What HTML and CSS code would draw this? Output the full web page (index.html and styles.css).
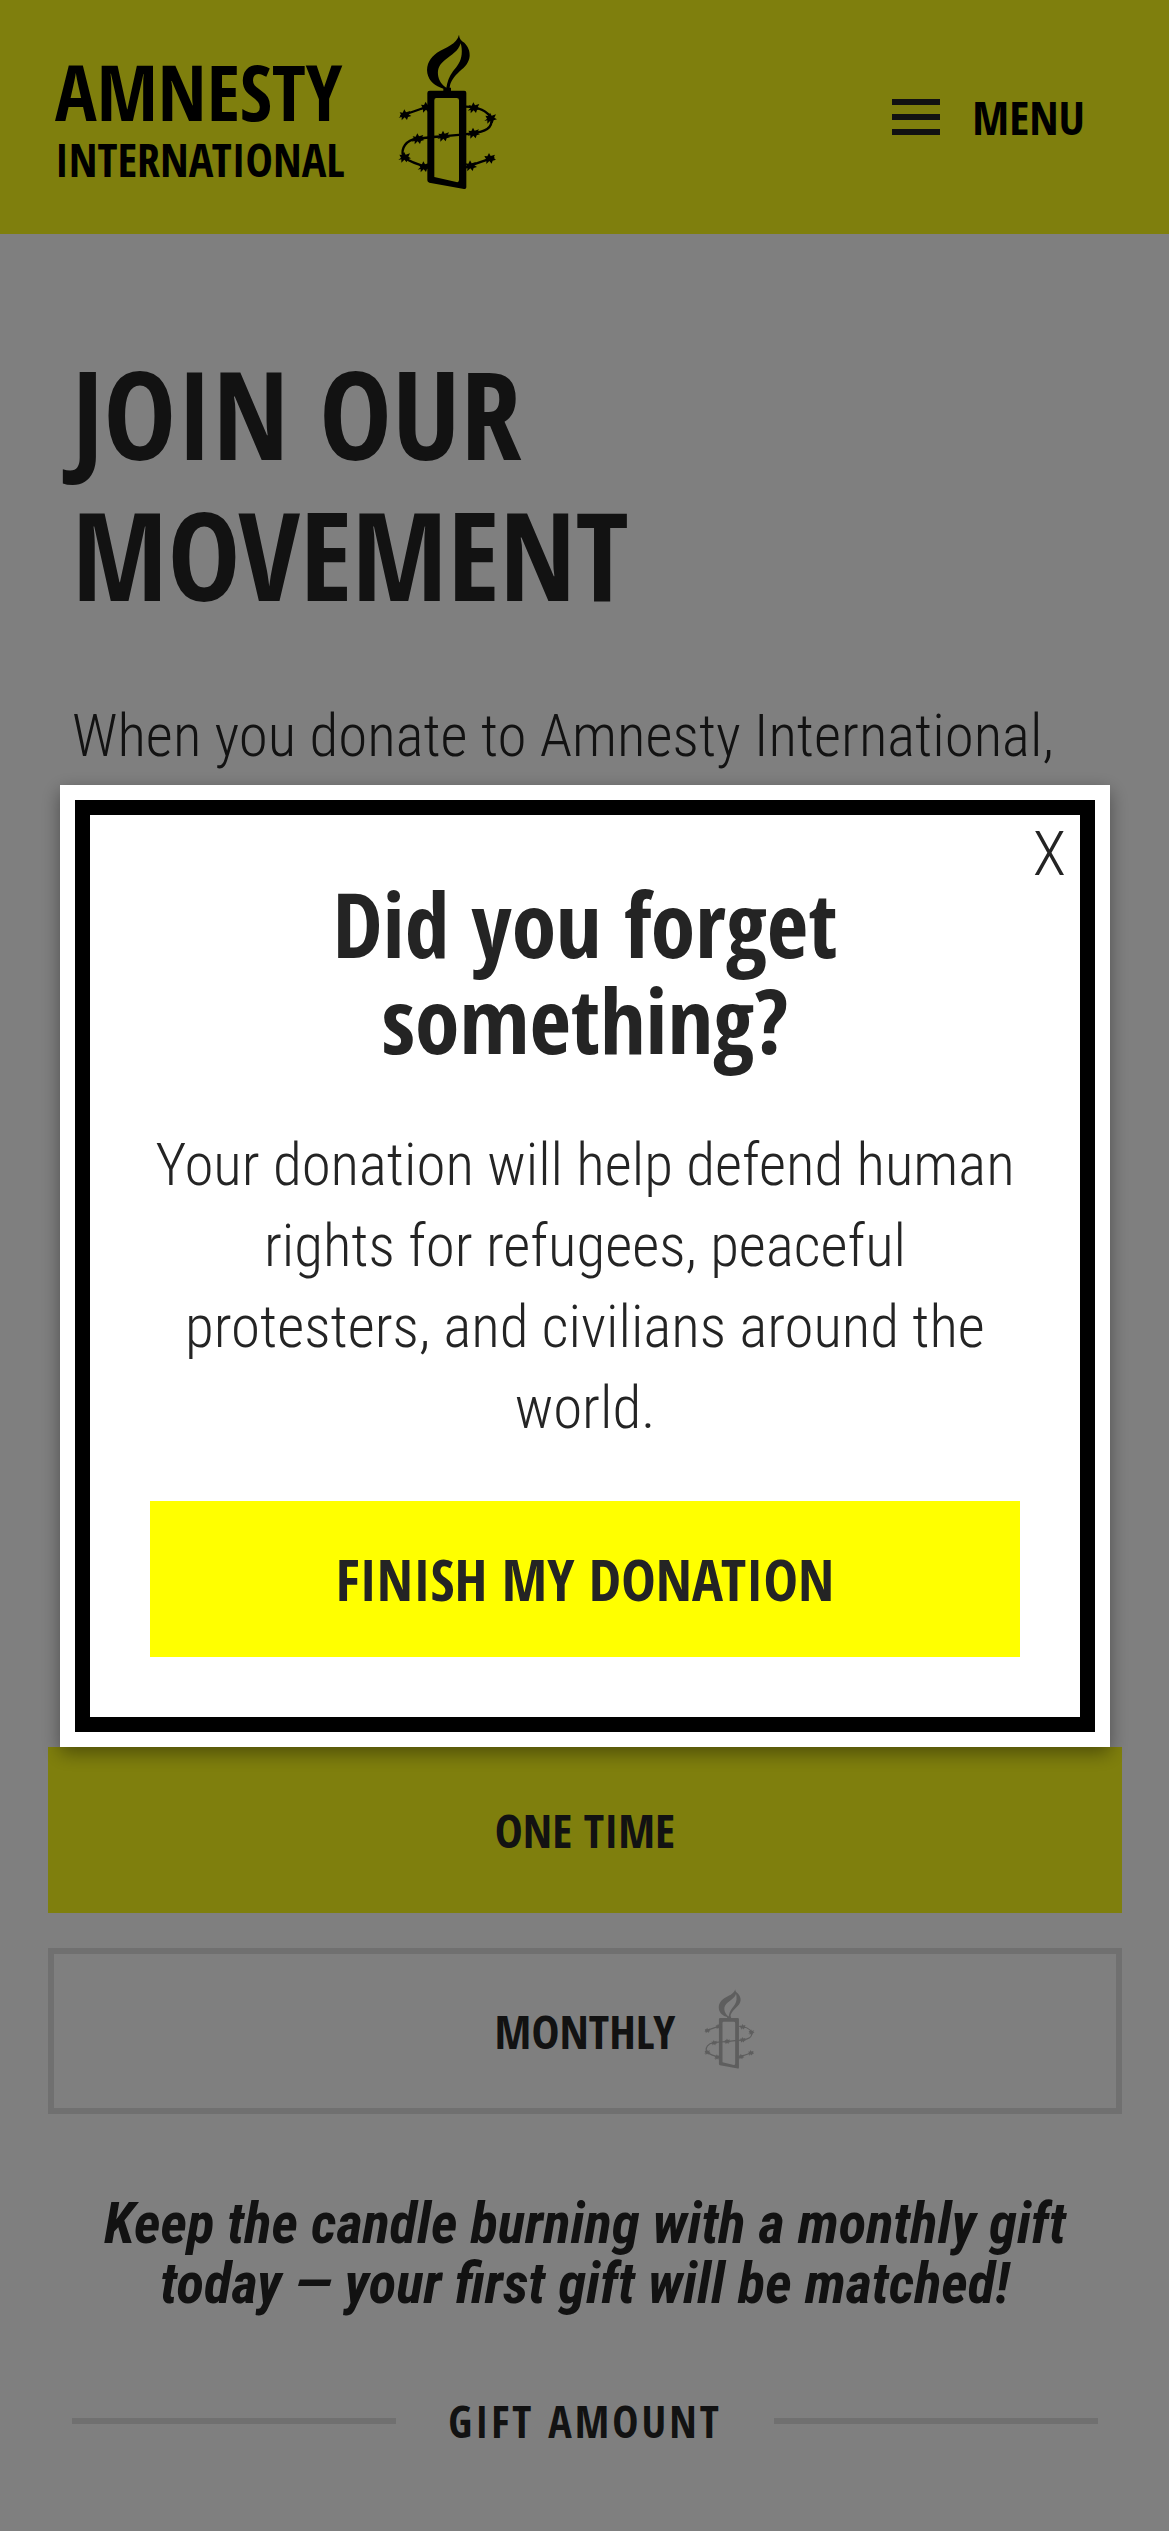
FILE: index.html
```html
<!DOCTYPE html>
<html lang="en">
<head>
<meta charset="utf-8">
<meta name="viewport" content="width=device-width, initial-scale=1">
<title>Join our movement</title>
<link rel="stylesheet" href="styles.css">
</head>
<body>
<svg class="sprite" aria-hidden="true">
  <defs>
    <path id="barb" d="M-19 9L-11 2L-16 -7L-7 -6L-2 -16L3 -7L16 -11L11 -1L19 4L9 7L6 16L-1 8L-10 17L-10 7Z"/>
    <symbol id="candle" viewBox="50 42 300 468">
      <path fill-rule="evenodd" d="M236 44C237 56 242 62 252 68C263 80 269 92 268 108C266 128 255 140 238 154C222 169 210 184 208 203H212V213H189V206C164 198 146 184 141 160C137 132 150 113 170 98C196 82 230 72 236 44ZM241 70C234 94 214 104 193 121C179 132 171 145 173 164C175 181 184 194 198 203C201 186 206 170 218 154C231 139 242 124 244 103C245 91 244 80 241 70Z"/>
      <path fill-rule="evenodd" d="M148 212H252Q258 212 258 218V502Q258 508 251 507L147 488Q141 486 141 481V219Q141 212 148 212ZM168 234Q162 234 162 241V471L228 486Q236 488 236 480V241Q236 234 229 234Z"/>
      <path fill="none" stroke="currentColor" stroke-width="7" d="M60 288Q105 273 146 258M256 260C292 261 320 272 333 295C338 325 314 335 275 340C220 348 157 350 110 356C76 360 62 385 68 409C83 422 112 434 146 442M255 442Q296 427 342 412"/>
      <use href="#barb" x="74" y="284"/><use href="#barb" x="138" y="261"/>
      <use href="#barb" x="281" y="263"/><use href="#barb" x="331" y="294"/>
      <use href="#barb" x="280" y="339"/><use href="#barb" x="190" y="348"/>
      <use href="#barb" x="113" y="356"/><use href="#barb" x="73" y="411"/>
      <use href="#barb" x="131" y="440"/><use href="#barb" x="271" y="437"/>
      <use href="#barb" x="328" y="415"/>
    </symbol>
  </defs>
</svg>

<header class="site-header">
  <a class="brand" href="#">
    <span class="brand-name">
      <span class="brand-top">AMNESTY</span>
      <span class="brand-bottom">INTERNATIONAL</span>
    </span>
    <svg class="brand-candle" aria-hidden="true"><use href="#candle"/></svg>
  </a>
  <button class="menu-button" type="button">
    <span class="menu-icon" aria-hidden="true"><span class="menu-bar"></span><span class="menu-bar"></span><span class="menu-bar"></span></span>
    MENU
  </button>
</header>

<main>
  <section class="intro">
    <h1 class="page-title">JOIN OUR MOVEMENT</h1>
    <p class="lead">When you donate to Amnesty International,</p>
  </section>
  <section class="donate">
    <button class="frequency frequency-selected" type="button">ONE TIME</button>
    <button class="frequency" type="button">
      <span class="frequency-label">MONTHLY<svg class="frequency-candle" aria-hidden="true"><use href="#candle"/></svg></span>
    </button>
    <p class="match-note">Keep the candle burning with a monthly gift today — your first gift will be matched!</p>
    <h2 class="divider">GIFT AMOUNT</h2>
  </section>
</main>

<div class="overlay">
  <div class="modal" role="dialog" aria-modal="true" aria-labelledby="modal-title">
    <div class="modal-frame">
      <button class="modal-close" type="button" aria-label="Close">X</button>
      <h2 class="modal-title" id="modal-title">Did you forget something?</h2>
      <p class="modal-text">Your donation will help defend human rights for refugees, peaceful protesters, and civilians around the world.</p>
      <button class="modal-action" type="button">FINISH MY DONATION</button>
    </div>
  </div>
</div>
</body>
</html>
```
FILE: styles.css
```css
:root {
  --ink: #242424;
  --yellow: #ffff1a;
  --rule: #e0e0e0;
  --heading: "Open Sans Condensed", "Roboto Condensed", "Open Sans", sans-serif;
  --body: "Roboto Condensed", "Roboto", sans-serif;
}

* { box-sizing: border-box; }

body {
  margin: 0;
  min-height: 100vh;
  background: #fff;
  color: var(--ink);
  font-family: var(--body);
  font-weight: 300;
}

h1, h2, p { margin: 0; }

button {
  border: 0;
  padding: 0;
  background: none;
  color: inherit;
  font: inherit;
  cursor: pointer;
}

.sprite { position: absolute; width: 0; height: 0; }

.site-header {
  display: flex;
  align-items: center;
  justify-content: space-between;
  height: 234px;
  padding: 0 84px 0 55px;
  background: var(--yellow);
  color: #000;
  font-family: var(--heading);
  font-weight: 700;
}

.brand {
  display: flex;
  align-items: center;
  gap: 52px;
  color: inherit;
  text-decoration: none;
}

.brand-name { display: flex; flex-direction: column; }
.brand-top { font-size: 78px; line-height: 84px; }
.brand-bottom { font-size: 46px; line-height: 52px; }
.brand-candle { width: 100px; height: 156px; margin-bottom: 10px; fill: currentColor; }

.menu-button {
  display: flex;
  align-items: center;
  gap: 32px;
  font-size: 47px;
  font-weight: 700;
}

.menu-icon { display: flex; flex-direction: column; gap: 9px; }
.menu-bar { width: 48px; height: 6px; background: var(--ink); }

.intro { height: 1513px; padding: 109px 72px 0; }

.page-title {
  max-width: 700px;
  font-family: var(--heading);
  font-size: 122px;
  line-height: 141px;
}

.lead { margin-top: 70px; font-size: 59px; line-height: 81px; }

.donate { padding: 0 47px 0 48px; }

.frequency {
  display: block;
  width: 100%;
  height: 166px;
  margin-bottom: 35px;
  border: 6px solid var(--rule);
  font-family: var(--heading);
  font-size: 47px;
  font-weight: 700;
}

.frequency-selected { border-color: var(--yellow); background: var(--yellow); }
.frequency-label { position: relative; }

.frequency-candle {
  position: absolute;
  left: 100%;
  top: 50%;
  width: 52px;
  height: 80px;
  margin: -42px 0 0 28px;
  fill: currentColor;
  opacity: 0.3;
}

.match-note {
  margin-top: 80px;
  padding: 0 40px;
  font-size: 57px;
  font-style: italic;
  font-weight: 700;
  line-height: 60px;
  text-align: center;
}

.divider {
  display: flex;
  align-items: center;
  gap: 52px;
  margin: 77px 24px 0;
  font-family: var(--heading);
  font-size: 44px;
  line-height: 60px;
  letter-spacing: 3px;
}

.divider::before,
.divider::after {
  content: "";
  flex: 1;
  height: 6px;
  background: var(--rule);
}

.overlay {
  position: fixed;
  inset: 0;
  display: flex;
  align-items: center;
  justify-content: center;
  padding: 0 59px 0 60px;
  background: rgba(0, 0, 0, 0.5);
}

.modal {
  width: 100%;
  padding: 15px;
  background: #fff;
  box-shadow: 0 6px 18px rgba(0, 0, 0, 0.4);
}

.modal-frame {
  position: relative;
  padding: 60px;
  border: 15px solid #000;
  text-align: center;
}

.modal-close {
  position: absolute;
  top: 3px;
  right: 14px;
  font-size: 62px;
  line-height: 72px;
}

.modal-title {
  max-width: 640px;
  margin: 0 auto;
  font-family: var(--heading);
  font-size: 90px;
  line-height: 96px;
}

.modal-text { margin-top: 57px; font-size: 59px; line-height: 81px; }

.modal-action {
  width: 100%;
  height: 156px;
  margin-top: 53px;
  background: #ff0;
  font-family: var(--heading);
  font-size: 58px;
  font-weight: 700;
}
```
